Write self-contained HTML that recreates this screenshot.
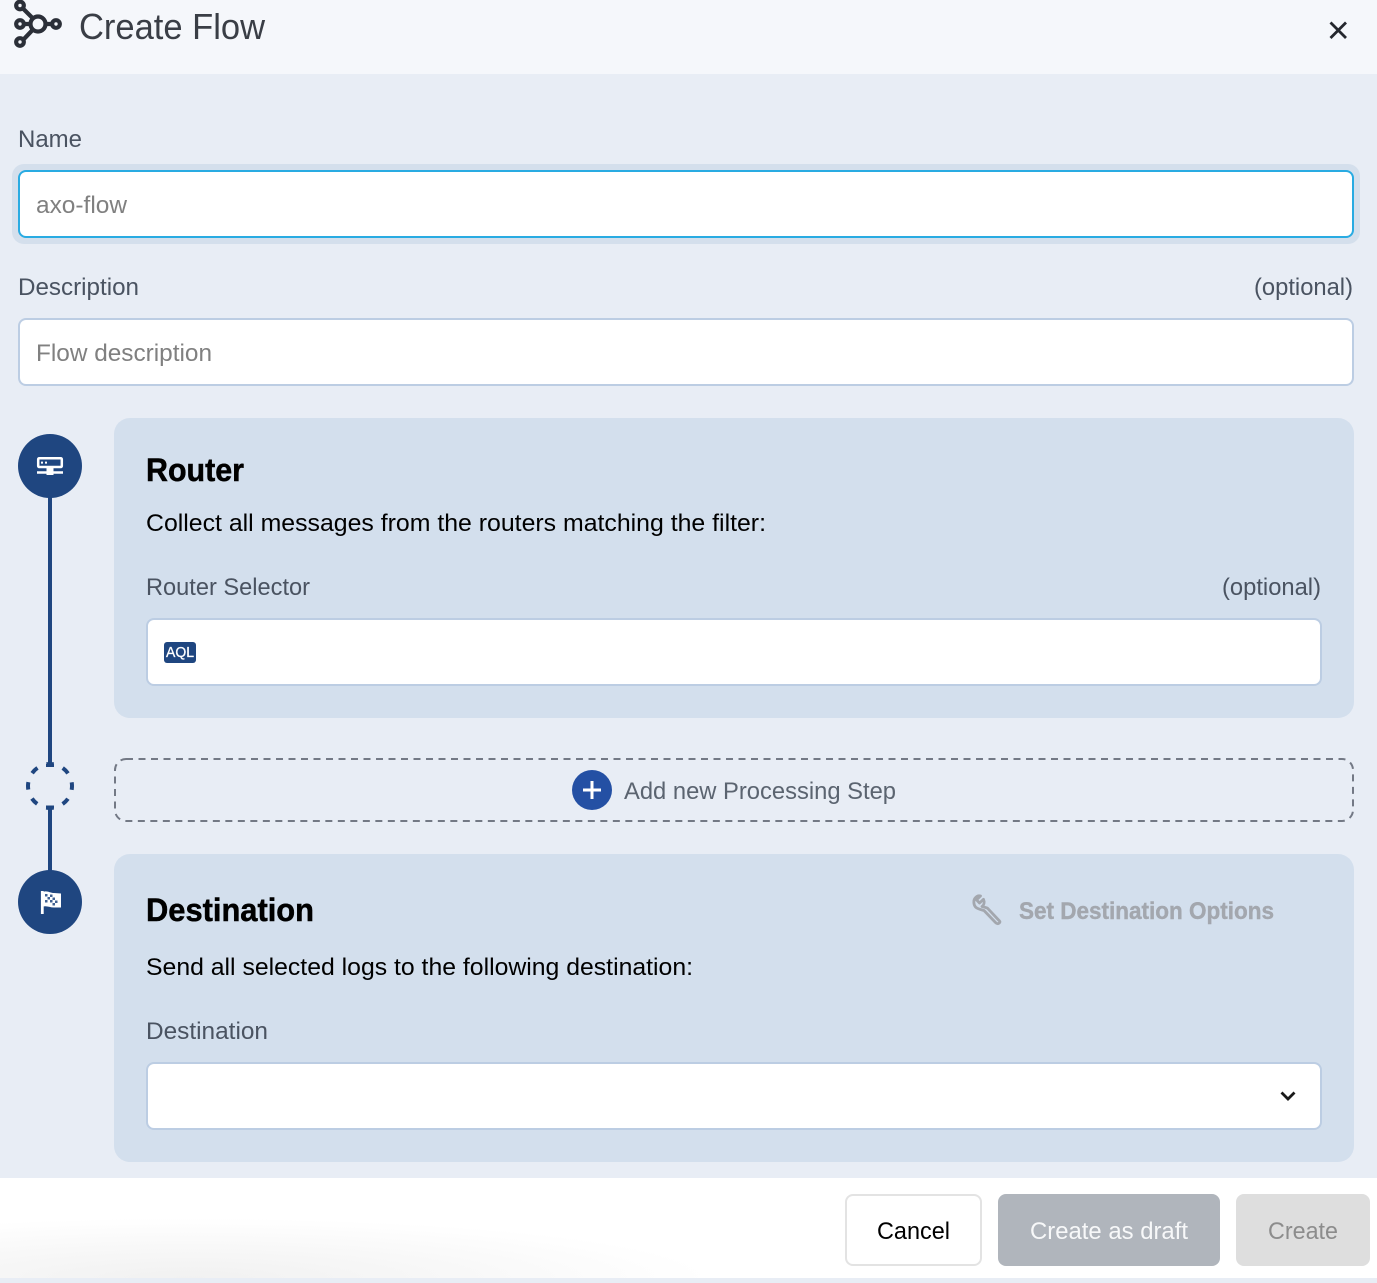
<!DOCTYPE html>
<html><head><meta charset="utf-8"><style>
*{box-sizing:border-box}
html,body{margin:0;padding:0;width:1377px;height:1283px;overflow:hidden;background:#e8edf5;font-family:"Liberation Sans",sans-serif}
.a{position:absolute}
.inp{background:#fff;border:2px solid #bccde3;border-radius:8px}
svg{position:absolute;left:0;top:0}
text{font-family:"Liberation Sans",sans-serif}
</style></head><body>
<div class="a" style="left:0;top:0;width:1377px;height:74px;background:#f5f7fb"></div>
<div class="a" style="left:12px;top:164px;width:1348px;height:80px;background:#d4dfec;border-radius:12px"></div>
<div class="a inp" style="left:18px;top:170px;width:1336px;height:68px;border-color:#29abe2"></div>
<div class="a inp" style="left:18px;top:318px;width:1336px;height:68px"></div>
<div class="a" style="left:114px;top:418px;width:1240px;height:300px;background:#d3dfed;border-radius:16px"></div>
<div class="a inp" style="left:146px;top:618px;width:1176px;height:68px"></div>
<div class="a" style="left:114px;top:854px;width:1240px;height:308px;background:#d3dfed;border-radius:16px"></div>
<div class="a inp" style="left:146px;top:1062px;width:1176px;height:68px"></div>
<div class="a" style="left:0;top:1178px;width:1377px;height:100px;background:#fff"></div>
<div class="a" style="left:0;top:1218px;width:720px;height:60px;background:radial-gradient(ellipse 520px 60px at 190px 100%,#f1f1f1 0%,#f7f7f7 45%,#fff 100%)"></div>
<div class="a" style="left:845px;top:1194px;width:137px;height:72px;background:#fff;border:2px solid #e3e3e3;border-radius:8px"></div>
<div class="a" style="left:998px;top:1194px;width:222px;height:72px;background:#b0b5bc;border-radius:8px"></div>
<div class="a" style="left:1236px;top:1194px;width:134px;height:72px;background:#dedede;border-radius:8px"></div>
<div class="a" style="left:164px;top:642px;width:32px;height:21px;background:#1f4680;border-radius:3px"></div>

<svg width="1377" height="1283" viewBox="0 0 1377 1283" xmlns="http://www.w3.org/2000/svg">
<!-- dashed box -->
<rect x="115" y="759" width="1238" height="62" rx="11" fill="none" stroke="#737985" stroke-width="2" stroke-dasharray="7 5.500"/>
<!-- logo -->
<g fill="none" stroke="#2b2f38" stroke-width="4.200">
<circle cx="20" cy="5.500" r="3.800"/><circle cx="20" cy="24" r="3.800"/><circle cx="20" cy="42" r="3.800"/><circle cx="56" cy="24" r="3.800"/><circle cx="38" cy="24" r="7.500"/>
<path d="M23 8.500L33 18.500M24 24H30.500M46 24H52M23.500 39.500L33 29.500"/>
</g>
<text x="79" y="39" font-size="36" fill="#3a3e46" textLength="186" lengthAdjust="spacingAndGlyphs">Create Flow</text>
<path d="M1330.500 22.500L1346 38M1346 22.500L1330.500 38" stroke="#24272e" stroke-width="2.800" fill="none"/>

<g font-size="24" fill="#4a5361">
<text x="18" y="147" textLength="64" lengthAdjust="spacingAndGlyphs">Name</text>
<text x="18" y="295" textLength="121" lengthAdjust="spacingAndGlyphs">Description</text>
<text x="1254" y="295" textLength="99" lengthAdjust="spacingAndGlyphs">(optional)</text>
<text x="146" y="595" textLength="164" lengthAdjust="spacingAndGlyphs">Router Selector</text>
<text x="1222" y="595" textLength="99" lengthAdjust="spacingAndGlyphs">(optional)</text>
<text x="146" y="1039" textLength="122" lengthAdjust="spacingAndGlyphs">Destination</text>
<text x="624" y="799" textLength="272" lengthAdjust="spacingAndGlyphs" fill="#5b6470">Add new Processing Step</text>
</g>
<g font-size="24" fill="#808080">
<text x="36" y="213" textLength="91" lengthAdjust="spacingAndGlyphs">axo-flow</text>
<text x="36" y="361" textLength="176" lengthAdjust="spacingAndGlyphs">Flow description</text>
</g>
<text x="146" y="481" font-size="32" font-weight="700" fill="#000" stroke="#000" stroke-width="0.500" textLength="98" lengthAdjust="spacingAndGlyphs">Router</text>
<text x="146" y="531" font-size="24" fill="#000" textLength="620" lengthAdjust="spacingAndGlyphs">Collect all messages from the routers matching the filter:</text>
<text x="146" y="921" font-size="32" font-weight="700" fill="#000" stroke="#000" stroke-width="0.500" textLength="168" lengthAdjust="spacingAndGlyphs">Destination</text>
<text x="146" y="975" font-size="24" fill="#000" textLength="547" lengthAdjust="spacingAndGlyphs">Send all selected logs to the following destination:</text>
<text x="1019" y="919" font-size="24" font-weight="700" fill="#a3a7ae" stroke="#a3a7ae" stroke-width="0.400" textLength="255" lengthAdjust="spacingAndGlyphs">Set Destination Options</text>
<text x="166" y="657" font-size="14.500" fill="#fff" stroke="#fff" stroke-width="0.300" textLength="28" lengthAdjust="spacingAndGlyphs">AQL</text>
<text x="877" y="1239" font-size="24" fill="#000" textLength="73" lengthAdjust="spacingAndGlyphs">Cancel</text>
<text x="1030" y="1239" font-size="24" fill="#f7f8f9" textLength="158" lengthAdjust="spacingAndGlyphs">Create as draft</text>
<text x="1268" y="1239" font-size="24" fill="#8c8c8c" textLength="70" lengthAdjust="spacingAndGlyphs">Create</text>

<!-- timeline -->
<g stroke="#1f4680" fill="none">
<path d="M50 490V766M50 806V880" stroke-width="4"/>
<circle cx="50" cy="786" r="22" stroke-width="4" stroke-dasharray="7.500 9.780" stroke-dashoffset="3.750" transform="rotate(-90 50 786)"/>
<path d="M46 765.500H54M46 807H54" stroke-width="3"/>
</g>
<circle cx="50" cy="466" r="32" fill="#1f4680"/>
<circle cx="50" cy="902" r="32" fill="#1f4680"/>
<!-- router icon -->
<g fill="none" stroke="#fff">
<rect x="38.200" y="458.200" width="23.600" height="8.800" rx="1" stroke-width="2.500"/>
<path d="M37 472.500H63" stroke-width="2.500"/>
<path d="M41 462.600H43M45 462.600H47" stroke-width="2"/>
</g>
<rect x="46.500" y="467" width="7" height="8" fill="#fff"/>
<!-- flag icon -->
<path d="M42.300 891V914" stroke="#fff" stroke-width="2.800"/>
<path d="M43 892C47 890 50 893 54 893L61 893.500V907.500L54 907.500C50 907.500 47 905.500 43 906.500Z" fill="#fff"/>
<g fill="#1f4680" opacity="0.850">
<rect x="45" y="894" width="2.500" height="2.500"/><rect x="50" y="894.500" width="2.500" height="2.500"/><rect x="47.500" y="897" width="2.500" height="2.500"/><rect x="52.500" y="897.500" width="2.500" height="2.500"/><rect x="45" y="900" width="2.500" height="2.500"/><rect x="50" y="900" width="2.500" height="2.500"/><rect x="55" y="900.500" width="2.500" height="2.500"/><rect x="52.500" y="903" width="2.500" height="2.500"/>
</g>
<!-- plus -->
<circle cx="592" cy="790" r="20" fill="#2450a4"/>
<path d="M583 790H601M592 781V799" stroke="#fff" stroke-width="3"/>
<!-- wrench -->
<path d="M980.500 896L976.500 899.800L979.500 903L983.500 899.300C984.800 902.200 984 905 982 906.500C984 907 986 907.500 987.500 908.200L999.500 921C1000.500 922 999.500 923 998.500 923.500C997.500 924 996.500 923.500 995.500 922.500L984 910.500C981 909.700 977.500 909 975.500 907C973.500 904.500 973.300 900.500 975 898.200C976.800 896 978.800 895.500 980.500 896Z" fill="none" stroke="#a3a7ae" stroke-width="2.800" stroke-linejoin="round"/>
<!-- chevron -->
<path d="M1281.500 1092.500L1288 1099L1294.500 1092.500" fill="none" stroke="#1a1a1a" stroke-width="2.800"/>
</svg>
</body></html>
